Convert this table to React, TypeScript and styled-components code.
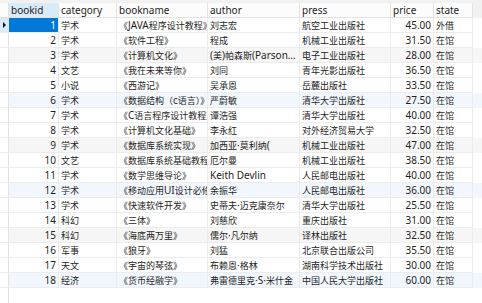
import React from "react";
import styled, { createGlobalStyle } from "styled-components";

const GlobalStyle = createGlobalStyle`
  html, body { margin: 0; padding: 0; background: #ffffff; }
  body { font-family: "Noto Sans", "Noto Sans CJK SC", sans-serif; }
  #root { height: 100vh; }
`;

const COLS = "9px 50px 58px 91px 92px 91px 43px 39px 1fr";

type Book = [number, string, string, string, string, string, string];

const rows: Book[] = [
  [1, "学术", "《JAVA程序设计教程》", "刘志宏", "航空工业出版社", "45.00", "外借"],
  [2, "学术", "《软件工程》", "程成", "机械工业出版社", "31.50", "在馆"],
  [3, "学术", "《计算机文化》", "(美)帕森斯(Parsons J.J.)", "电子工业出版社", "28.00", "在馆"],
  [4, "文艺", "《我在未来等你》", "刘同", "青年光影出版社", "36.50", "在馆"],
  [5, "小说", "《西游记》", "吴承恩", "岳麓出版社", "33.50", "在馆"],
  [6, "学术", "《数据结构（c语言）》", "严蔚敏", "清华大学出版社", "27.50", "在馆"],
  [7, "学术", "《C语言程序设计教程》", "谭浩强", "清华大学出版社", "40.00", "在馆"],
  [8, "学术", "《计算机文化基础》", "李永红", "对外经济贸易大学", "32.50", "在馆"],
  [9, "学术", "《数据库系统实现》", "加西亚·莫利纳(", "机械工业出版社", "47.00", "在馆"],
  [10, "文艺", "《数据库系统基础教程》", "厄尔曼", "机械工业出版社", "38.50", "在馆"],
  [11, "学术", "《数学思维导论》", "Keith Devlin", "人民邮电出版社", "40.00", "在馆"],
  [12, "学术", "《移动应用UI设计必修课》", "余振华", "人民邮电出版社", "36.00", "在馆"],
  [13, "学术", "《快速软件开发》", "史蒂夫·迈克康奈尔", "清华大学出版社", "25.50", "在馆"],
  [14, "科幻", "《三体》", "刘慈欣", "重庆出版社", "31.00", "在馆"],
  [15, "科幻", "《海底两万里》", "儒尔·凡尔纳", "译林出版社", "32.50", "在馆"],
  [16, "军事", "《狼牙》", "刘猛", "北京联合出版公司", "35.50", "在馆"],
  [17, "天文", "《宇宙的琴弦》", "布赖恩·格林", "湖南科学技术出版社", "30.00", "在馆"],
  [18, "经济", "《货币经融学》", "弗雷德里克·S·米什金", "中国人民大学出版社", "60.00", "在馆"],
];

const Page = styled.div`
  height: 100%;
  display: flex;
  flex-direction: column;
  background: #ffffff;
  font-size: 10px;
  color: #1e1e1e;
  overflow: hidden;
`;

const HeaderBar = styled.div`
  padding-top: 3px;
  background: #f1f1f1;
`;

const HeaderRow = styled.div`
  display: grid;
  grid-template-columns: ${COLS};
  height: 15px;
`;

const HeaderCell = styled.div<{ $active?: boolean; $blank?: boolean }>`
  box-sizing: border-box;
  height: 15px;
  line-height: 14px;
  padding: 0 2px;
  white-space: nowrap;
  overflow: hidden;
  background: ${(p) => (p.$active ? "#d9eaf9" : p.$blank ? "transparent" : "#fcfcfc")};
  border-right: ${(p) => (p.$blank ? "none" : "1px solid #e3e3e3")};
  border-bottom: ${(p) => (p.$blank ? "none" : "1px solid #e3e3e3")};
`;

type Tint = "none" | "gray" | "blue";

const Row = styled.div<{ $tint: Tint }>`
  display: grid;
  grid-template-columns: ${COLS};
  height: 15px;
  background: ${(p) =>
    p.$tint === "gray" ? "#f6f6f6" : p.$tint === "blue" ? "#f1f7fd" : "#ffffff"};
`;

const Indicator = styled.div<{ $current?: boolean }>`
  box-sizing: border-box;
  height: 15px;
  display: flex;
  align-items: center;
  padding-left: 3px;
  background: ${(p) => (p.$current ? "#d9eaf9" : "#ffffff")};
  border-right: 1px solid #e3e3e3;
  border-bottom: 1px solid #ececec;
`;

const Arrow = styled.span`
  width: 0;
  height: 0;
  border-left: 3px solid #111111;
  border-top: 3px solid transparent;
  border-bottom: 3px solid transparent;
`;

const Cell = styled.div<{ $right?: boolean; $selected?: boolean; $ellipsis?: boolean }>`
  box-sizing: border-box;
  height: 15px;
  line-height: 14px;
  padding: 0 2px;
  white-space: nowrap;
  overflow: hidden;
  text-overflow: ${(p) => (p.$ellipsis ? "ellipsis" : "clip")};
  text-align: ${(p) => (p.$right ? "right" : "left")};
  background: ${(p) => (p.$selected ? "#0078d7" : "transparent")};
  color: ${(p) => (p.$selected ? "#ffffff" : "#1e1e1e")};
  border-right: 1px solid #ececec;
  border-bottom: 1px solid #ececec;
`;

const Spacer = styled.div`
  border-bottom: none;
`;

const Filler = styled.div`
  flex: 1;
  display: grid;
  grid-template-columns: ${COLS};
`;

const FillerIndicator = styled.div`
  border-right: 1px solid #e3e3e3;
`;

const Cjk = styled.span`
  font-family: "Noto Sans CJK SC", sans-serif;
  font-size: 9px;
`;

const CJK_RE = /([\u3000-\u303f\u4e00-\u9fff\uff00-\uffef]+)/;

function Txt({ text }: { text: string }) {
  const parts = text.split(CJK_RE).filter((s) => s.length > 0);
  return (
    <>
      {parts.map((part, i) =>
        CJK_RE.test(part) ? <Cjk key={i}>{part}</Cjk> : <span key={i}>{part}</span>
      )}
    </>
  );
}

const headers = ["bookid", "category", "bookname", "author", "press", "price", "state"];

function tintFor(id: number): Tint {
  if (id % 3 !== 0) return "none";
  return (id / 3) % 2 === 1 ? "gray" : "blue";
}

export default function App() {
  return (
    <>
      <GlobalStyle />
      <Page>
        <HeaderBar>
          <HeaderRow>
            <HeaderCell />
            {headers.map((h) => (
              <HeaderCell key={h} $active={h === "bookid"}>
                {h}
              </HeaderCell>
            ))}
            <HeaderCell $blank />
          </HeaderRow>
        </HeaderBar>
        {rows.map(([id, cat, name, author, press, price, state]) => (
          <Row key={id} $tint={tintFor(id)}>
            <Indicator $current={id === 1}>{id === 1 && <Arrow />}</Indicator>
            <Cell $right $selected={id === 1}>
              {id}
            </Cell>
            <Cell>
              <Txt text={cat} />
            </Cell>
            <Cell>
              <Txt text={name} />
            </Cell>
            <Cell $ellipsis>
              <Txt text={author} />
            </Cell>
            <Cell>
              <Txt text={press} />
            </Cell>
            <Cell $right>{price}</Cell>
            <Cell>
              <Txt text={state} />
            </Cell>
            <Spacer />
          </Row>
        ))}
        <Filler>
          <FillerIndicator />
        </Filler>
      </Page>
    </>
  );
}
